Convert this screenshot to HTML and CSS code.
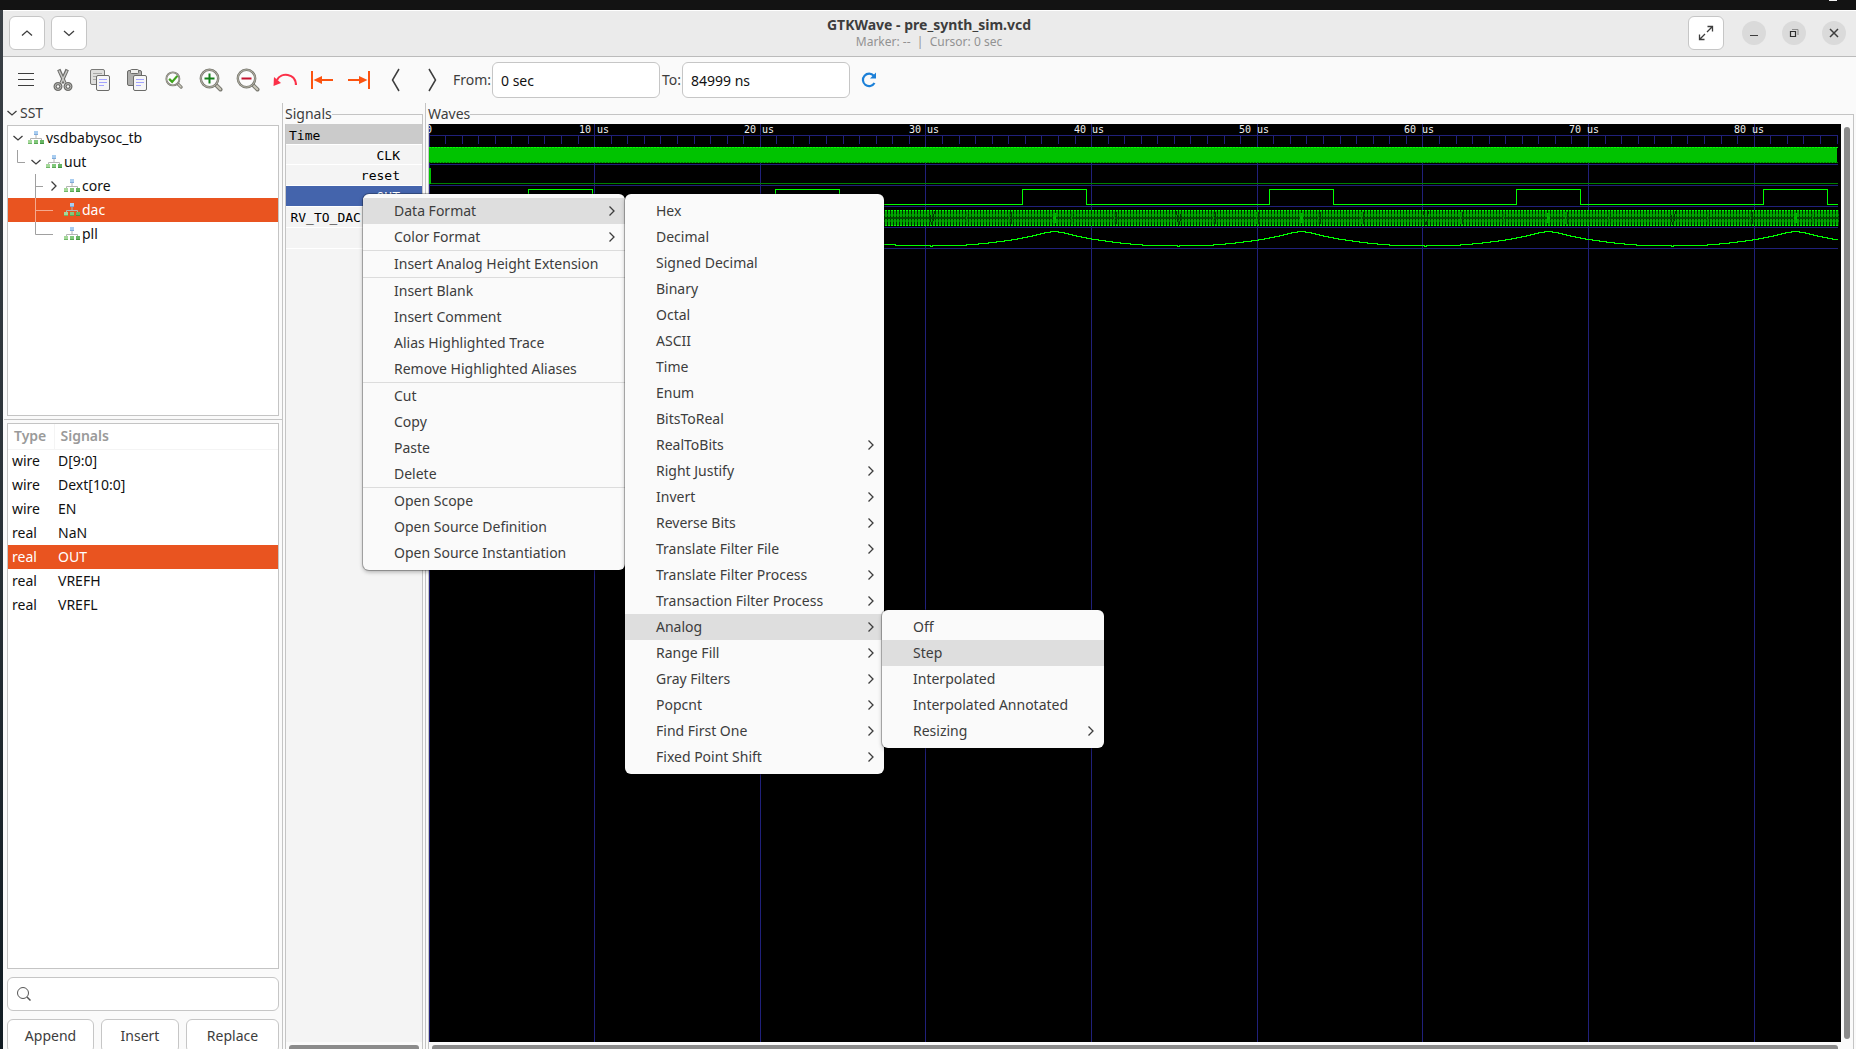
FILE: index.html
```html
<!DOCTYPE html>
<html lang="en">
<head>
<meta charset="utf-8">
<title>GTKWave - pre_synth_sim.vcd</title>
<link rel="stylesheet" href="styles.css">
</head>
<body>
<svg class="defs" aria-hidden="true">
  <symbol id="down" viewBox="0 0 10 10"><path d="M0.5 3 5 7 9.5 3" fill="none" stroke="currentColor" stroke-width="1.3"/></symbol>
  <symbol id="right" viewBox="0 0 10 10"><path d="M2.5 0.5 7 5 2.5 9.5" fill="none" stroke="currentColor" stroke-width="1.3"/></symbol>
  <symbol id="module" viewBox="0 0 16 14">
    <path d="M8 4v4M2.500 10V7.500h11V10" fill="none" stroke="#b4b4b4"/>
    <rect x="6" y="0" width="4" height="4" fill="#a9cdf0"/><rect x="6" y="3" width="4" height="1" fill="#7fa9d8"/>
    <rect x="0" y="9" width="4" height="4" fill="#a5d89a"/><rect x="0" y="12" width="4" height="1" fill="#6fb868"/>
    <rect x="6" y="9" width="4" height="4" fill="#82c87c"/><rect x="6" y="12" width="4" height="1" fill="#5aa855"/>
    <rect x="12" y="9" width="4" height="4" fill="#68b564"/><rect x="12" y="12" width="4" height="1" fill="#439640"/>
  </symbol>
  <symbol id="page" viewBox="0 0 14 16">
    <rect x="0.5" y="0.5" width="13" height="15" rx="1.500" fill="#f6f6f6" stroke="#6b6b69"/>
    <path d="M3 4.500h8M3 7.500h8M3 10.500h5" stroke="#a3a3ff" fill="none"/>
  </symbol>
  <symbol id="lens" viewBox="0 0 24 24">
    <path d="M16.500 16.500 21.500 21.500" stroke="#77776f" stroke-width="4" stroke-linecap="round"/>
    <path d="M17 17 21.300 21.300" stroke="#c9c6b8" stroke-width="2" stroke-linecap="round"/>
    <circle cx="10.500" cy="10.500" r="8.700" fill="#fcfcfc" stroke="#77776f" stroke-width="2.400"/>
    <circle cx="10.500" cy="10.500" r="8.700" fill="none" stroke="#c4c1b2" stroke-width="0.800"/>
  </symbol>
</svg>
<div class="desktop-bar"><i></i></div>
<div class="app">
  <header class="titlebar">
    <div class="side">
      <button class="box" aria-label="Previous"><svg width="12" height="12" viewBox="0 0 12 12"><path d="M1 8.500 6 4l5 4.500" fill="none" stroke="#3d3d3d" stroke-width="1.300"/></svg></button>
      <button class="box" aria-label="Next"><svg width="12" height="12" viewBox="0 0 12 12"><path d="M1 4 6 8.500 11 4" fill="none" stroke="#3d3d3d" stroke-width="1.300"/></svg></button>
    </div>
    <div class="title"><h1>GTKWave - pre_synth_sim.vcd</h1><p>Marker: --&nbsp; |&nbsp; Cursor: 0 sec</p></div>
    <div class="side end">
      <button class="box" aria-label="Fullscreen"><svg width="16" height="16" viewBox="0 0 16 16"><path d="M9.500 1.500h5v5M14.500 1.500 9 7M1.500 9.500v5h5M1.500 14.500 7 9" fill="none" stroke="#3d3d3d" stroke-width="1.300"/></svg></button>
      <button class="round" aria-label="Minimize"><svg width="10" height="10"><path d="M1 7.500h8" stroke="#3d3d3d"/></svg></button>
      <button class="round" aria-label="Restore"><svg width="10" height="10"><path d="M3 1.500h6V7" fill="none" stroke="#8c8c8c"/><path d="M1.500 3.500h5v5h-5z" fill="none" stroke="#2e2e2e" stroke-width="1.200"/></svg></button>
      <button class="round" aria-label="Close"><svg width="10" height="10"><path d="M1 1l8 8M9 1 1 9" stroke="#3d3d3d" stroke-width="1.500"/></svg></button>
    </div>
  </header>

  <div class="toolbar">
    <button aria-label="Menu"><svg width="16" height="16"><path d="M0 1.500h16M0 7.500h16M0 13.500h16" stroke="#3d3d3d" stroke-width="1.200"/></svg></button>
    <button aria-label="Cut"><svg width="20" height="24" viewBox="0 0 20 24">
      <path d="M5.800 1.500 11.800 15M14.200 1.500 8.200 15" stroke="#6d6d6a" stroke-width="3.600"/>
      <path d="M6 2.500 12 15M14 2.500 8 15" stroke="#c9c9c6" stroke-width="1.400"/>
      <g fill="none" stroke="#6d6d6a" stroke-width="3.200"><circle cx="5" cy="18.500" r="2.900"/><circle cx="15" cy="18.500" r="2.900"/></g>
      <g fill="none" stroke="#b9b9b6"><circle cx="5" cy="18.500" r="2.900"/><circle cx="15" cy="18.500" r="2.900"/></g></svg></button>
    <button aria-label="Copy"><svg width="20" height="22"><rect x="0.500" y="0.500" width="14" height="15" rx="1.500" fill="#dededc" stroke="#7a7a78"/><path d="M3 4.500h9M3 7.500h5M3 10.500h3" stroke="#a9a9a7"/><use href="#page" x="6" y="6" width="14" height="16"/></svg></button>
    <button aria-label="Paste"><svg width="20" height="22"><rect x="0.500" y="1.500" width="14" height="15" rx="1.500" fill="#aeaeac" stroke="#6b6b69"/><rect x="3.500" y="0.500" width="8" height="4" rx="1" fill="#efefed" stroke="#6b6b69"/><use href="#page" x="6" y="6" width="14" height="16"/></svg></button>
    <button aria-label="Zoom fit"><svg width="18" height="18" viewBox="0 0 24 24"><use href="#lens" width="24" height="24"/><path d="M5.500 10.500 9.500 14.500 16.500 6.500" fill="none" stroke="#3fa41c" stroke-width="3"/></svg></button>
    <button aria-label="Zoom in"><svg width="24" height="24"><use href="#lens" width="24" height="24"/><path d="M10.500 5.500v10M5.500 10.500h10" stroke="#13801a" stroke-width="2"/></svg></button>
    <button aria-label="Zoom out"><svg width="24" height="24"><use href="#lens" width="24" height="24"/><path d="M5.500 10.500h10" stroke="#c4122f" stroke-width="2"/></svg></button>
    <button aria-label="Undo zoom"><svg width="24" height="16"><path d="M23 13C22.500 1 8 0 4 8" fill="none" stroke="#fb3048" stroke-width="2.200"/><path d="M0.500 14 1 5 8 11z" fill="#fb3048"/></svg></button>
    <button aria-label="To start"><svg width="22" height="18"><path d="M1 0v18M6 9h16" stroke="#fb5310" stroke-width="2"/><path d="M2.500 9 11 5v8z" fill="#fb5310"/></svg></button>
    <button aria-label="To end"><svg width="22" height="18"><path d="M21 0v18M0 9h16" stroke="#fb5310" stroke-width="2"/><path d="M19.500 9 11 5v8z" fill="#fb5310"/></svg></button>
    <button aria-label="Previous edge"><svg width="9" height="24"><path d="M8 1 1.500 12 8 23" fill="none" stroke="#3d3d3d" stroke-width="1.500"/></svg></button>
    <button aria-label="Next edge"><svg width="9" height="24"><path d="M1 1 7.500 12 1 23" fill="none" stroke="#3d3d3d" stroke-width="1.500"/></svg></button>
    <label for="from">From:</label><input id="from" type="text" value="0 sec">
    <label for="to">To:</label><input id="to" type="text" value="84999 ns">
    <button aria-label="Reload"><svg width="16" height="16" viewBox="0 0 16 16"><path d="M12.800 3.800A6.200 6.200 0 1 0 13.500 11" fill="none" stroke="#1c80d8" stroke-width="2.200"/><path d="M15 0.500V6.500H9z" fill="#1c80d8"/></svg></button>
  </div>

  <main class="panes">
    <section class="sst">
      <h2><svg width="10" height="10"><use href="#down"/></svg>SST</h2>
      <ul class="tree">
        <li><svg class="tw" width="10" height="10"><use href="#down"/></svg><svg class="mod" width="16" height="14"><use href="#module"/></svg>vsdbabysoc_tb</li>
        <li class="l1"><svg class="guide" width="8" height="24"><path d="M.5 0v12.500H8"/></svg><svg class="tw" width="10" height="10"><use href="#down"/></svg><svg class="mod" width="16" height="14"><use href="#module"/></svg>uut</li>
        <li class="l2"><svg class="guide" width="18" height="24"><path d="M.5 0v24M.5 12.500H8"/></svg><svg class="tw" width="10" height="10"><use href="#right"/></svg><svg class="mod" width="16" height="14"><use href="#module"/></svg>core</li>
        <li class="l2 selected"><svg class="guide" width="18" height="24"><path d="M.5 0v24M.5 12.500H18"/></svg><i class="tw"></i><svg class="mod" width="16" height="14"><use href="#module"/></svg>dac</li>
        <li class="l2"><svg class="guide" width="18" height="24"><path d="M.5 0v12.500H18"/></svg><i class="tw"></i><svg class="mod" width="16" height="14"><use href="#module"/></svg>pll</li>
      </ul>
      <hr>
      <div class="list">
        <table>
          <thead><tr><th>Type</th><th>Signals</th></tr></thead>
          <tbody>
            <tr><td>wire</td><td>D[9:0]</td></tr>
            <tr><td>wire</td><td>Dext[10:0]</td></tr>
            <tr><td>wire</td><td>EN</td></tr>
            <tr><td>real</td><td>NaN</td></tr>
            <tr class="selected"><td>real</td><td>OUT</td></tr>
            <tr><td>real</td><td>VREFH</td></tr>
            <tr><td>real</td><td>VREFL</td></tr>
          </tbody>
        </table>
      </div>
      <label class="search"><svg width="14" height="14"><circle cx="6" cy="6" r="5.500" fill="none" stroke="#555"/><path d="M10 10l3.500 3.500" stroke="#555" stroke-width="1.500"/></svg><input type="text" aria-label="Filter signals"></label>
      <div class="actions"><button>Append</button><button>Insert</button><button>Replace</button></div>
    </section>

    <section class="frame signals">
      <h2>Signals</h2>
      <div class="frame-body">
        <ul class="names">
          <li class="time">Time</li>
          <li class="first">CLK</li>
          <li>reset</li>
          <li class="active">OUT</li>
          <li>RV_TO_DAC[9:0]</li>
          <li></li>
        </ul>
        <div class="hbar"><i></i></div>
      </div>
    </section>

    <section class="frame waves">
      <h2>Waves</h2>
      <div class="frame-body">
        <div class="view"><svg id="waves" role="img" aria-label="Waveforms"></svg></div>
        <div class="vbar"><i></i></div>
        <div class="hbar"><i></i></div>
      </div>
    </section>
  </main>
</div>

<ul class="menu context">
  <li class="on"><button>Data Format<svg width="10" height="10"><use href="#right"/></svg></button>
    <ul class="menu sub">
      <li><button>Hex</button></li>
      <li><button>Decimal</button></li>
      <li><button>Signed Decimal</button></li>
      <li><button>Binary</button></li>
      <li><button>Octal</button></li>
      <li><button>ASCII</button></li>
      <li><button>Time</button></li>
      <li><button>Enum</button></li>
      <li><button>BitsToReal</button></li>
      <li><button>RealToBits<svg width="10" height="10"><use href="#right"/></svg></button></li>
      <li><button>Right Justify<svg width="10" height="10"><use href="#right"/></svg></button></li>
      <li><button>Invert<svg width="10" height="10"><use href="#right"/></svg></button></li>
      <li><button>Reverse Bits<svg width="10" height="10"><use href="#right"/></svg></button></li>
      <li><button>Translate Filter File<svg width="10" height="10"><use href="#right"/></svg></button></li>
      <li><button>Translate Filter Process<svg width="10" height="10"><use href="#right"/></svg></button></li>
      <li><button>Transaction Filter Process<svg width="10" height="10"><use href="#right"/></svg></button></li>
      <li class="on"><button>Analog<svg width="10" height="10"><use href="#right"/></svg></button>
        <ul class="menu sub deep">
          <li><button>Off</button></li>
          <li class="on"><button>Step</button></li>
          <li><button>Interpolated</button></li>
          <li><button>Interpolated Annotated</button></li>
          <li><button>Resizing<svg width="10" height="10"><use href="#right"/></svg></button></li>
        </ul>
      </li>
      <li><button>Range Fill<svg width="10" height="10"><use href="#right"/></svg></button></li>
      <li><button>Gray Filters<svg width="10" height="10"><use href="#right"/></svg></button></li>
      <li><button>Popcnt<svg width="10" height="10"><use href="#right"/></svg></button></li>
      <li><button>Find First One<svg width="10" height="10"><use href="#right"/></svg></button></li>
      <li><button>Fixed Point Shift<svg width="10" height="10"><use href="#right"/></svg></button></li>
    </ul>
  </li>
  <li><button>Color Format<svg width="10" height="10"><use href="#right"/></svg></button></li>
  <li class="rule"><button>Insert Analog Height Extension</button></li>
  <li class="rule"><button>Insert Blank</button></li>
  <li><button>Insert Comment</button></li>
  <li><button>Alias Highlighted Trace</button></li>
  <li><button>Remove Highlighted Aliases</button></li>
  <li class="rule"><button>Cut</button></li>
  <li><button>Copy</button></li>
  <li><button>Paste</button></li>
  <li><button>Delete</button></li>
  <li class="rule"><button>Open Scope</button></li>
  <li><button>Open Source Definition</button></li>
  <li><button>Open Source Instantiation</button></li>
</ul>
<script src="waves.js"></script>
</body>
</html>
```
FILE: styles.css
```css
* { box-sizing: border-box; }
html, body { height: 100%; }
body {
  margin: 0;
  overflow: hidden;
  position: relative;
  background: linear-gradient(#3a4046, #2a3238 50%, #101b22);
  color: #3d3d3d;
  font: 14px/20px "Noto Sans", "Open Sans", sans-serif;
}
h1, h2, p, ul { margin: 0; padding: 0; font: inherit; }
ul { list-style: none; }
button, input { font: inherit; color: inherit; }
button { padding: 0; border: 0; background: none; }
svg { display: block; flex: none; }
.defs { position: absolute; width: 0; height: 0; }

.desktop-bar { display: flex; justify-content: flex-end; height: 10px; padding-right: 19px; background: #131313; }
.desktop-bar i { width: 8px; height: 1px; background: #f0f0f0; }

.app { display: flex; flex-direction: column; height: calc(100vh + 2px); margin-left: 3px; background: #fafafa; }

.titlebar {
  display: flex; align-items: center; flex: none;
  height: 47px; padding: 0 10px 1px 6px;
  background: #ebebeb; border-top: 1px solid #fff; border-bottom: 1px solid #bbb;
}
.side { display: flex; flex: 1; align-items: center; gap: 6px; }
.side.end { justify-content: flex-end; gap: 16px; }
.box { display: grid; place-items: center; width: 36px; height: 34px; background: #fff; border: 1px solid #c6c6c6; border-radius: 6px; }
.round { display: grid; place-items: center; width: 24px; height: 24px; border-radius: 50%; background: #dadada; }
.side.end .box { margin-right: 2px; }
.title { padding-left: 3px; text-align: center; }
.title h1 { font-size: 14px; font-weight: 700; line-height: 18px; }
.title p { font-size: 12px; line-height: 16px; color: #929292; }

.toolbar { display: flex; align-items: center; flex: none; height: 46px; padding-left: 4px; }
.toolbar button { display: grid; place-items: center; width: 37px; height: 36px; }
.toolbar label { width: 41px; padding-left: 2px; }
.toolbar input { width: 168px; height: 36px; padding: 0 8px; border: 1px solid #c6c6c6; border-radius: 6px; background: #fff; color: #111; }
.toolbar input + label { width: 22px; }

.panes { display: flex; flex: 1; min-height: 0; }
.sst { display: flex; flex-direction: column; flex: none; width: 280px; padding: 0 3px 8px 4px; border-right: 1px solid #c4c4c4; }
.sst h2 { display: flex; align-items: center; gap: 3px; height: 19px; margin-bottom: 3px; }
.tree { flex: none; height: 291px; background: #fff; border: 1px solid #c4c4c4; color: #111; }
.tree li { display: flex; align-items: center; position: relative; height: 24px; padding-left: 5px; }
.tree .l1 { padding-left: 23px; }
.tree .l2 { padding-left: 41px; }
.tw { width: 10px; margin-right: 5px; color: #3d3d3d; }
.mod { margin-right: 2px; }
.guide { position: absolute; top: 0; left: 9px; fill: none; stroke: #a0a0a0; }
.l2 .guide { left: 27px; }
.tree .selected, tr.selected { background: #e95420; color: #fff; }
.selected .guide { stroke: #f4a98f; }
.sst hr { margin: 3px -3px; border: 0; border-top: 1px solid #c4c4c4; }
.list { flex: 1; min-height: 0; background: #fff; border: 1px solid #c4c4c4; }
table { width: 100%; border-collapse: collapse; color: #111; }
th, td { height: 24px; padding: 0 0 0 4px; text-align: left; }
th { height: 25px; padding-left: 6px; border-bottom: 1px solid #f4f4f4; color: #9a9a9a; font-weight: 600; }
th:first-child { width: 46px; border-right: 1px solid #f4f4f4; }
.search { display: flex; align-items: center; flex: none; gap: 6px; height: 34px; margin: 8px 0; padding-left: 9px; border: 1px solid #c6c6c6; border-radius: 6px; background: #fff; }
.search input { flex: 1; min-width: 0; border: 0; background: none; }
.actions { display: grid; flex: none; grid-template-columns: 87fr 78fr 93fr; gap: 7px; }
.actions button { height: 34px; border: 1px solid #c6c6c6; border-radius: 6px; background: #fff; }

.frame { display: flex; flex-direction: column; min-width: 0; padding: 0 2px; }
.frame h2 { display: flex; height: 21px; line-height: 22px; }
.frame h2::after { content: ""; flex: 1; margin-top: 11px; border: solid #c4c4c4; border-width: 1px 1px 0 0; }
.frame-body { flex: 1; min-height: 0; border: solid #c4c4c4; border-width: 0 1px; }
.signals { width: 143px; flex: none; border-right: 1px solid #c4c4c4; }
.signals .frame-body { display: flex; flex-direction: column; }
.names { flex: 1; overflow: hidden; background: #f4f4f4; color: #000; font: 13px/22px "DejaVu Sans Mono", monospace; }
.names li { height: 21px; padding: 0 22px 0 3px; border-bottom: 1px solid #fff; text-align: right; white-space: nowrap; }
.names .time { height: 20px; border: 0; background: #cbcbcb; line-height: 24px; text-align: left; }
.names .first { border-top: 1px solid #fff; }
.names .active { background: #4464ac; color: #fff; }
.hbar { flex: none; height: 19px; padding: 3px 3px 0; }
.hbar i { display: block; height: 6px; border-radius: 3px; background: #8b8b8b; }
.waves { flex: 1; }
.waves .frame-body { display: grid; grid-template: minmax(0, 1fr) 19px / minmax(0, 1fr) 12px; }
.view { overflow: hidden; background: #000; }
#waves { width: 100%; height: 100%; font: 10px "DejaVu Sans Mono", monospace; }
.vbar { padding: 3px; }
.vbar i { display: block; height: 100%; border-radius: 3px; background: #8b8b8b; }

.menu { position: absolute; z-index: 1; padding: 4px 0; background: #fafafa; border-radius: 6px; box-shadow: 0 0 0 1px rgba(0, 0, 0, .25), 0 2px 4px rgba(0, 0, 0, .3); }
.context { left: 363px; top: 194px; width: 262px; }
.menu li { position: relative; }
.menu button { display: flex; align-items: center; justify-content: space-between; width: 100%; height: 26px; padding: 0 8px 0 31px; text-align: left; white-space: nowrap; }
.menu .on > button { background: #dedede; }
.menu .rule { border-top: 1px solid #dcdcdc; }
.sub { left: 100%; top: -4px; width: 259px; }
.deep { left: calc(100% - 2px); width: 222px; }
```
FILE: waves.js
```javascript
(function () {
  var svg = document.getElementById("waves");
  var GRID = "#20207a", LIT = "#00ff00", MID = "#00c300", DIM = "#008000";

  function line(d, color) {
    return '<path d="' + d + '" fill="none" stroke="' + color + '" shape-rendering="crispEdges"/>';
  }
  function box(x, y, w, h, fill) {
    return '<rect x="' + x + '" y="' + y + '" width="' + w + '" height="' + h + '" fill="' + fill + '" shape-rendering="crispEdges"/>';
  }

  // Vertical position of the analog trace by distance from its peak.
  var curve = [[0, 107], [8, 108], [16, 110], [24, 112], [40, 115], [54, 117], [70, 119], [94, 121], [121, 121], [124, 122]];
  function level(d) {
    for (var i = 1; i < curve.length; i++) {
      if (d <= curve[i][0]) {
        var a = curve[i - 1], b = curve[i];
        return Math.round(a[1] + (b[1] - a[1]) * (d - a[0]) / (b[0] - a[0]));
      }
    }
    return 121;
  }

  function draw() {
    var full = svg.parentNode.clientWidth, h = svg.parentNode.clientHeight;
    var w = full - 3, us = (w - 1) / 85, s = "", i, x;

    // Time ruler and grid
    var grid = "M0 11.5H" + w;
    for (i = 0; i <= 85; i++) {
      x = Math.floor(i * us) + 0.5;
      grid += "M" + x + (i % 10 ? " 12V20" : " 0V" + h);
    }
    [40, 61, 82, 103, 124].forEach(function (y) { grid += "M0 " + (y + 0.5) + "H" + w; });
    s += line(grid, GRID);
    for (i = 0; i <= 80; i += 10) {
      s += '<text x="' + Math.round(i * us * 0.996) + '" y="9" text-anchor="middle" fill="#f0f0f0">' + (i ? i + " us" : "0") + "</text>";
    }

    // CLK
    s += box(0, 23, w - 1, 16, MID);
    s += '<path d="M0 23.5H' + w + '" stroke="' + LIT + '" stroke-dasharray="2 1"/>';
    s += '<path d="M0 38.5H' + w + '" stroke="' + DIM + '" stroke-dasharray="2 1"/>';

    // reset
    s += box(0, 44, 2, 16, MID) + line("M2 59.5H" + w, DIM);

    // OUT
    var period = 14.91 * us, d = "M0 80.5";
    for (x = 6 * us; x < w; x += period) {
      var r = Math.floor(x) + 0.5, f = Math.min(Math.floor(x + 3.86 * us) + 0.5, w);
      d += "H" + r + "V65.5H" + f + "V80.5";
    }
    s += line(d + "H" + w, LIT);

    // RV_TO_DAC[9:0]
    s += '<defs><pattern id="bus" width="3" height="16" y="86" patternUnits="userSpaceOnUse">' +
      box(0, 0, 2, 16, "#00a800") + box(2, 0, 1, 16, "#002c00") +
      box(0, 0, 2, 1, LIT) + box(0, 15, 2, 1, LIT) +
      box(0, 7, 3, 2, "#004a00") +
      box(2, 4, 1, 2, "#007400") + box(2, 10, 1, 2, "#007400") +
      "</pattern></defs>" + box(0, 86, w + 1, 16, "url(#bus)");

    // Analog OUT, with the bus thickening at each peak and opening at each trough
    var peak = 7.95 * us, points = [];
    for (x = 0; x <= w; x++) {
      var off = ((x - peak) % period + period) % period;
      points.push(x + " " + (level(Math.min(off, period - off) * 247 / period) + 0.5));
      if (off < 1) {
        s += box(x - 2, 89, 3, 10, "#00b400");
        s += line("M" + (x - 125.5) + " 87l2 14M" + (x - 122.5) + " 101l2 -14", "#003c00");
        [-88, -45, 17, 60].forEach(function (o) {
          s += box(x + o - 1, 88, 1, 12, "#008c00") + box(x + o + 1, 88, 1, 12, "#004400");
        });
      }
    }
    s += line("M" + points.join("L"), LIT);
    svg.innerHTML = s;
  }

  draw();
  window.addEventListener("resize", draw);
})();
```
